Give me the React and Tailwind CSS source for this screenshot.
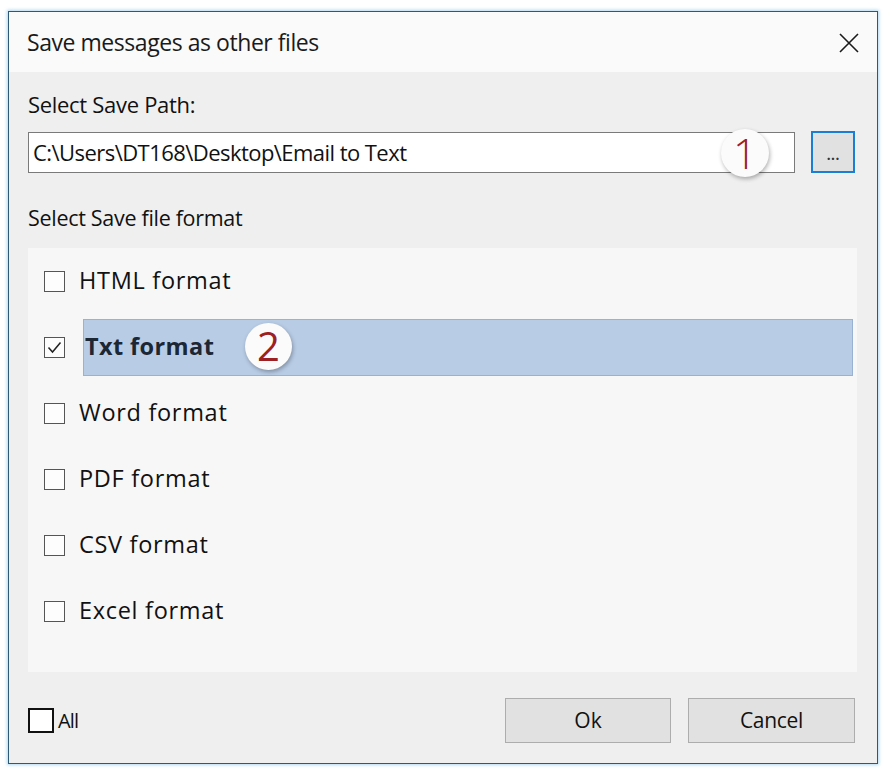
export default function App() {
  const rows = [
    { label: "HTML format" },
    { label: "Txt format", checked: true },
    { label: "Word format" },
    { label: "PDF format" },
    { label: "CSV format" },
    { label: "Excel format" },
  ];
  return (
    <div className="min-h-[778px] bg-white pl-[8px] pt-[11px] font-['Open_Sans',sans-serif] text-[#111]">
      <div className="w-[870px] h-[753px] border border-[#2d5876] shadow-[0_0_3px_1px_rgba(120,190,230,0.6)] flex flex-col">
        {/* title bar */}
        <div className="h-[60px] bg-[#fafafa] flex items-center justify-between pl-[18px] pr-[17px]">
          <span className="text-[23px] tracking-[-0.45px] text-[#1a1a1a]">Save messages as other files</span>
          <svg width="22" height="22" viewBox="0 0 22 22" className="mt-[2px]">
            <path d="M2 2 L20 20 M20 2 L2 20" stroke="#1a1a1a" strokeWidth="1.6" fill="none" />
          </svg>
        </div>
        {/* content */}
        <div className="flex-1 bg-[#efefef] pl-[19px] pr-[19px] flex flex-col">
          <div className="mt-[20px] h-[24px] leading-[24px] text-[22px] tracking-[-0.3px]">Select Save Path:</div>
          <div className="mt-[15px] h-[42px] flex items-center">
            <div className="relative w-[767px] h-[41px] bg-white border border-[#7a7a7a] flex items-center pl-[4px]">
              <span className="text-[22px] tracking-[-0.55px]">C:\Users\DT168\Desktop\Email to Text</span>
              <div className="absolute left-[692px] top-[-4px] w-[48px] h-[48px] rounded-full bg-[#fbfbfb] shadow-[1px_2px_4px_rgba(0,0,0,0.3)] flex items-center justify-center">
                <span className="text-[42px] leading-none text-[#9c2024] font-light">1</span>
              </div>
            </div>
            <div className="ml-[16px] w-[44px] h-[42px] bg-[#e1e1e1] border-2 border-[#1a7fd4] flex items-center justify-center">
              <span className="text-[16px] leading-none text-[#333] mt-[4px] font-semibold">...</span>
            </div>
          </div>
          <div className="mt-[33px] h-[24px] leading-[24px] text-[21.5px] tracking-[-0.3px]">Select Save file format</div>
          <div className="mt-[18px] w-[829px] h-[424px] bg-[#f7f7f7] flex flex-col">
            {rows.map((r) => (
              <div key={r.label} className="h-[66px] flex items-center pl-[16px]">
                <div className="w-[21px] h-[21px] border border-[#555] bg-[#fdfdfd] flex items-center justify-center shrink-0">
                  {r.checked && (
                    <svg width="17" height="17" viewBox="0 0 17 17">
                      <path d="M2.5 8.5 L6.5 13 L14.5 3.5" stroke="#222" strokeWidth="1.5" fill="none" />
                    </svg>
                  )}
                </div>
                {r.checked ? (
                  <div className="relative ml-[18px] mr-[4px] flex-1 h-[57px] bg-[#b8cce6] border border-[#9ab2d2] flex items-center pl-[1px]">
                    <span className="text-[23.5px] font-bold text-[#1c2733] tracking-[0.4px]">{r.label}</span>
                    <div className="absolute left-[161px] top-[3px] w-[47px] h-[47px] rounded-full bg-[#fbfbfb] shadow-[1px_2px_4px_rgba(0,0,0,0.3)] flex items-center justify-center">
                      <span className="text-[40px] leading-none text-[#9c2024]">2</span>
                    </div>
                  </div>
                ) : (
                  <span className="ml-[14px] text-[23.5px] tracking-[0.7px]">{r.label}</span>
                )}
              </div>
            ))}
          </div>
          <div className="mt-[26px] h-[45px] flex items-center w-[827px]">
            <div className="w-[26px] h-[25px] border-2 border-[#111] bg-white" />
            <span className="ml-[4px] text-[20px] tracking-[-0.8px]">All</span>
            <div className="ml-auto flex gap-[17px]">
              <div className="w-[166px] h-[45px] bg-[#e1e1e1] border border-[#adadad] flex items-center justify-center text-[21px]">Ok</div>
              <div className="w-[167px] h-[45px] bg-[#e1e1e1] border border-[#adadad] flex items-center justify-center text-[21px] tracking-[-0.3px]">Cancel</div>
            </div>
          </div>
        </div>
      </div>
    </div>
  );
}
